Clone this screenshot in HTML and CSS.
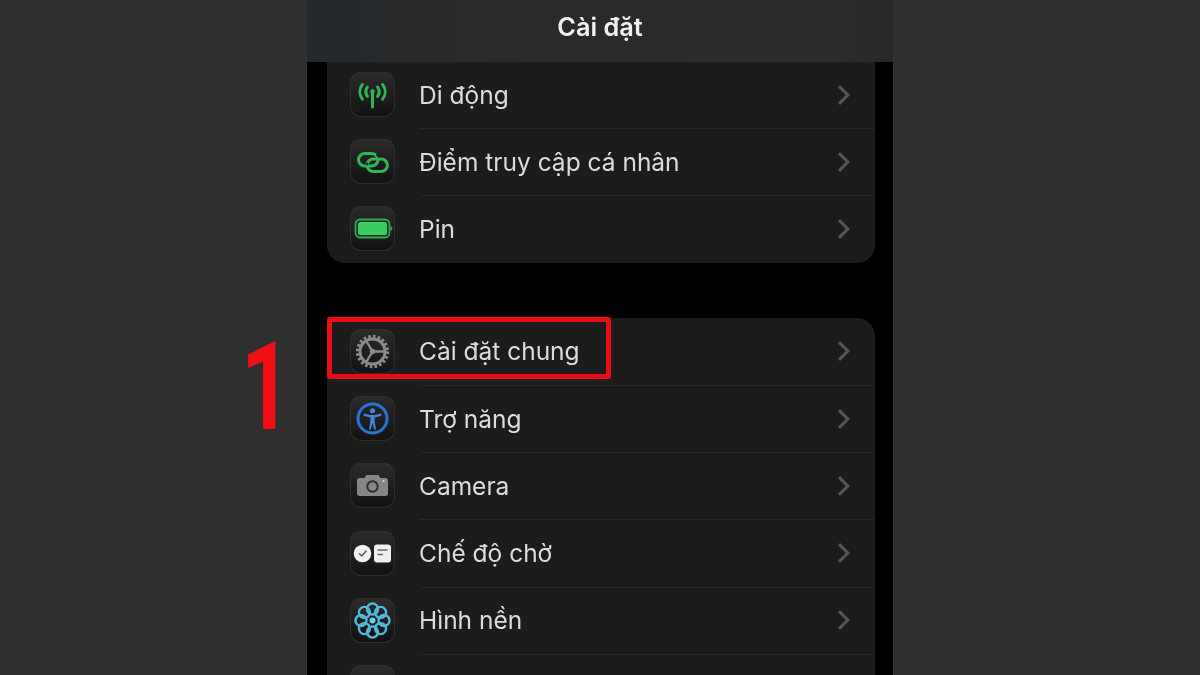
FILE: index.html
```html
<!DOCTYPE html>
<html>
<head>
  <meta charset="utf-8">
  <title>Cài đặt</title>
  <link rel="stylesheet" href="styles.css">
</head>
<body>
  <div class="stage">
    <div class="phone">
      <div class="topbar">Cài đặt</div>

      <div class="group group-cut">
        <div class="row row-first">
          <span class="icon">
            <svg viewBox="0 0 45 45" fill="none" stroke="#2fb457" stroke-width="3" stroke-linecap="round">
              <path d="M22.500 21v14"/>
              <circle cx="22.500" cy="19.500" r="2.200" fill="#2fb457" stroke="none"/>
              <path d="M17.400 15c-2 2.900-2 6.500 0 9.400"/>
              <path d="M27.600 15c2 2.900 2 6.500 0 9.400"/>
              <path d="M12.400 12.500c-3.400 4.400-3.400 10.300 0 14.700"/>
              <path d="M32.600 12.500c3.400 4.400 3.400 10.300 0 14.700"/>
            </svg>
          </span>
          <span class="label">Di động</span>
          <span class="chev"></span>
        </div>
        <div class="row">
          <span class="icon">
            <svg viewBox="0 0 45 45" fill="none" stroke="#2fb457" stroke-width="3">
              <rect x="8.500" y="14.500" width="19.500" height="12.500" rx="6.250"/>
              <rect x="17" y="20" width="20.500" height="12.500" rx="6.250"/>
              <path d="M26.500 15.500l3 3M18 24l-1.500 2" stroke="#1c1c1d" stroke-width="1.600"/>
            </svg>
          </span>
          <span class="label">Điểm truy cập cá nhân</span>
          <span class="chev"></span>
        </div>
        <div class="row">
          <span class="icon">
            <svg viewBox="0 0 45 45">
              <rect x="5.500" y="13.500" width="34" height="18" rx="4.500" fill="#16331f" stroke="#2fa851" stroke-width="1.800"/>
              <rect x="8" y="16" width="29" height="13" rx="2.500" fill="#3ccb60"/>
              <path d="M40.500 20c1.400.5 1.800 1.500 1.800 2.500s-.4 2-1.800 2.500z" fill="#2fa851"/>
            </svg>
          </span>
          <span class="label">Pin</span>
          <span class="chev"></span>
        </div>
      </div>

      <div class="group group-next">
        <div class="row">
          <span class="icon">
            <svg viewBox="0 0 45 45" fill="none" stroke="#8a8a8a">
              <circle cx="22.500" cy="22.500" r="12.500" stroke-width="3"/>
              <circle cx="22.500" cy="22.500" r="15" stroke-width="3.400" stroke-dasharray="2.600 2.110"/>
              <path d="M22.500 22.500L16 11.500M22.500 22.500L16 33.500M22.500 22.500H35" stroke-width="2.400"/>
              <circle cx="22.500" cy="22.500" r="2.800" fill="#8a8a8a" stroke="none"/>
            </svg>
          </span>
          <span class="label">Cài đặt chung</span>
          <span class="chev"></span>
          <span class="mark"></span>
        </div>
        <div class="row">
          <span class="icon">
            <svg viewBox="0 0 45 45" fill="none" stroke="#2a72d4">
              <circle cx="22.500" cy="22.500" r="14.500" stroke-width="3"/>
              <circle cx="22.500" cy="14.800" r="2.500" fill="#3f86e0" stroke="none"/>
              <path d="M14.800 18.800l5.700 1.500h4l5.700-1.500" stroke="#3f86e0" stroke-width="2.400" stroke-linecap="round" stroke-linejoin="round"/>
              <path d="M20.500 20h4l.2 6 1.300 7.500h-1.800l-1.700-6.500-1.700 6.500h-1.800l1.300-7.500z" fill="#3f86e0" stroke="none"/>
            </svg>
          </span>
          <span class="label">Trợ năng</span>
          <span class="chev"></span>
        </div>
        <div class="row">
          <span class="icon">
            <svg viewBox="0 0 45 45">
              <path d="M9.500 15h5l2-3h12l2 3h5c1.500 0 2.500 1 2.500 2.500v13c0 1.500-1 2.500-2.500 2.500h-26c-1.500 0-2.500-1-2.500-2.500v-13c0-1.500 1-2.500 2.500-2.500z" fill="#868688"/>
              <circle cx="22.500" cy="23.500" r="5.200" fill="none" stroke="#2f2f30" stroke-width="2"/>
              <circle cx="33.500" cy="18" r="1.100" fill="#dcdcdc"/>
            </svg>
          </span>
          <span class="label">Camera</span>
          <span class="chev"></span>
        </div>
        <div class="row">
          <span class="icon">
            <svg viewBox="0 0 45 45">
              <circle cx="12.500" cy="22.500" r="8.800" fill="#f0f0f0"/>
              <path d="M9 22.500l2.800 2.400 4.500-5.200" fill="none" stroke="#555" stroke-width="1.500"/>
              <rect x="24" y="13.500" width="17" height="18" rx="3" fill="#f0f0f0"/>
              <path d="M27.500 19h10M27.500 23.500h5.500" stroke="#666" stroke-width="1.600"/>
            </svg>
          </span>
          <span class="label">Chế độ chờ</span>
          <span class="chev"></span>
        </div>
        <div class="row">
          <span class="icon">
            <svg viewBox="0 0 45 45" fill="none" stroke="#4fb9dc" stroke-width="2.400">
              <circle cx="22.500" cy="11" r="5.500"/>
              <circle cx="30.600" cy="14.400" r="5.500"/>
              <circle cx="34" cy="22.500" r="5.500"/>
              <circle cx="30.600" cy="30.600" r="5.500"/>
              <circle cx="22.500" cy="34" r="5.500"/>
              <circle cx="14.400" cy="30.600" r="5.500"/>
              <circle cx="11" cy="22.500" r="5.500"/>
              <circle cx="14.400" cy="14.400" r="5.500"/>
              <circle cx="22.500" cy="22.500" r="3" fill="#6fcdea" stroke="none"/>
            </svg>
          </span>
          <span class="label">Hình nền</span>
          <span class="chev"></span>
        </div>
        <div class="row">
          <span class="icon"></span>
        </div>
      </div>
    </div>
    <div class="step">1</div>
  </div>
</body>
</html>
```

FILE: styles.css
```css
html, body {
  margin: 0;
  padding: 0;
  height: 100%;
}

body {
  background: #2f2f2f;
  overflow: hidden;
  font-family: Inter, "Noto Sans", sans-serif;
}

.stage {
  position: relative;
  height: 675px;
  display: flex;
  justify-content: center;
  overflow: hidden;
}

.phone {
  width: 586px;
  height: 675px;
  background: #000;
  overflow: hidden;
  filter: blur(0.7px);
}

.topbar {
  height: 62px;
  box-sizing: border-box;
  padding-bottom: 9px;
  display: flex;
  align-items: center;
  justify-content: center;
  background: linear-gradient(90deg, #24282b, #2a2a2a 35%, #2b2b2b 90%, #272727);
  color: #f0f0f0;
  font-size: 25.300px;
  font-weight: 600;
}

.group {
  margin: 0 18px 0 20px;
  background: #1c1c1d;
  border-radius: 18px;
}

.group-cut {
  border-radius: 0 0 18px 18px;
}

.group-next {
  margin-top: 55px;
}

.row {
  position: relative;
  height: 67.300px;
  display: flex;
  align-items: center;
  padding-left: 23px;
  padding-right: 23px;
}

.row-first {
  height: 66px;
}

.row-first .icon {
  margin-top: -2px;
}

.row + .row::before {
  content: "";
  position: absolute;
  top: 0;
  left: 92px;
  right: 0;
  height: 1px;
  background: #272729;
}

.icon {
  flex: none;
  width: 45px;
  height: 45px;
  border-radius: 11px;
  background: linear-gradient(180deg, #2b2b2c, #121213);
  box-shadow: inset 0 0 0 1px #2e2e30;
}

.icon svg {
  display: block;
  width: 45px;
  height: 45px;
}

.label {
  margin-left: 24px;
  flex: 1;
  color: #dcdcdc;
  font-size: 24.500px;
}

.chev {
  flex: none;
  width: 11px;
  height: 11px;
  margin-right: 5px;
  border-top: 3px solid #565658;
  border-right: 3px solid #565658;
  transform: rotate(45deg);
}

/* red box from the tutorial */
.mark {
  position: absolute;
  left: 0;
  top: -1px;
  width: 284px;
  height: 62px;
  box-sizing: border-box;
  border: 5px solid #e90e13;
  border-radius: 3px;
}

.step {
  position: absolute;
  left: 241px;
  top: 323px;
  color: #f00f14;
  font-family: Roboto, sans-serif;
  font-size: 122px;
  font-weight: 700;
  line-height: 130px;
  transform: scaleX(0.72);
  transform-origin: left center;
}
```
